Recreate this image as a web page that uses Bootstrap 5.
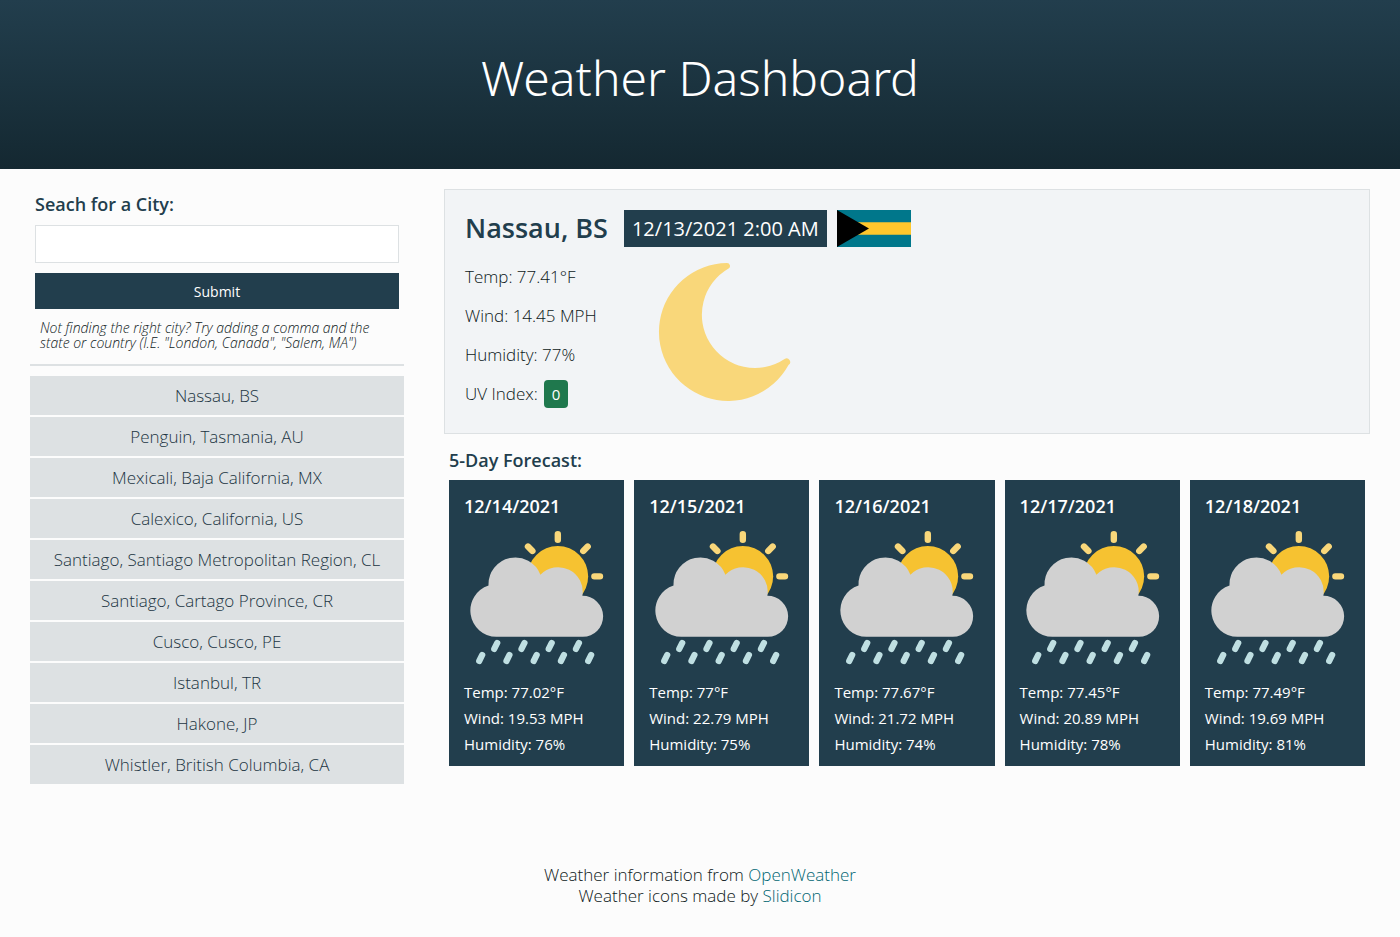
<!DOCTYPE html>
<html lang="en">
<head>
<meta charset="utf-8">
<meta name="viewport" content="width=device-width, initial-scale=1">
<title>Weather Dashboard</title>
<link rel="stylesheet" href="https://cdn.jsdelivr.net/npm/bootstrap@5.3.0/dist/css/bootstrap.min.css">
<style>
  :root { --navy: #223e4d; --mist: #dde1e3; --teal: #006672; }
  body { background: #fcfcfc; color: #0c1820; font-family: "Open Sans", "Noto Sans", sans-serif; font-size: 17px; font-weight: 300; line-height: 21px; }
  .page-head { background: linear-gradient(#223e4d, #142831); color: #fff; padding: 48px 20px 61px; }
  .page-head h1 { font-family: "Noto Sans", "Open Sans", sans-serif; font-size: 48px; font-weight: 300; line-height: 60px; }
  .layout { padding: 20px 10px 0; }
  .layout > * { padding: 0 20px; }
  .side-col { width: 30%; }
  .main-col { width: 70%; }
  .section-title { color: var(--navy); font-size: 18px; font-weight: 600; line-height: 21px; }
  .search-form { padding: 5px 5px 0; gap: 10px; }
  .search-form .form-control { height: 38px; border-color: var(--mist); background: #fff; }
  .search-form .btn { --bs-btn-bg: var(--navy); --bs-btn-color: #fff; --bs-btn-hover-bg: #142831; --bs-btn-hover-color: #fff; height: 36px; font-size: 14px; padding: 0; border: 0; }
  .hint { font-size: 14px; font-style: italic; line-height: 15px; padding: 1px 5px 14px; }
  .history { border-top: 2px solid var(--mist); padding-top: 10px; gap: 2px; }
  .history .btn { --bs-btn-bg: var(--mist); --bs-btn-color: #1b3442; --bs-btn-hover-bg: #cdd3d6; --bs-btn-hover-color: var(--navy); border: 0; font-size: 17px; font-weight: 300; line-height: 21px; padding: 9px 5px; }
  .today { background: #f2f4f6; border: 1px solid var(--mist); padding: 20px 20px 26px; }
  .today h2 { color: var(--navy); font-size: 27px; font-weight: 600; line-height: 35px; margin-right: 16px; }
  .stamp { background: var(--navy); color: #fff; font-size: 20px; font-weight: 400; line-height: 37px; padding: 0 8px; margin-right: 10px; }
  .flag { width: 74px; height: 37px; }
  .stats { padding-top: 19px; gap: 18px; width: 184px; }
  .uv { background: #1f784d; color: #fff; font-size: 15px; font-weight: 400; line-height: 28px; padding: 0 8px; margin: -3px 0 -4px 6px; border-radius: 4px; }
  .moon { width: 150px; height: 150px; margin-top: 10px; }
  .forecast { padding: 16px 5px 0; }
  .days { gap: 10px; padding-top: 9px; }
  .day { background: var(--navy); color: #fff; font-size: 15px; font-weight: 400; line-height: 26px; padding: 15px 15px 9px; flex: 1 1 0; min-width: 160px; }
  .day h4 { font-size: 18px; font-weight: 600; line-height: 22px; }
  .day svg { width: 100%; padding: 8px 0 9px; }
  footer { padding: 80px 0 30px; }
  footer a { color: var(--teal); }
</style>
</head>
<body>
<header class="page-head text-center"><h1 class="m-0">Weather Dashboard</h1></header>

<div class="container-fluid layout d-flex flex-wrap">
  <aside class="side-col">
    <form class="search-form d-flex flex-column" onsubmit="return false">
      <label class="section-title" for="city">Seach for a City:</label>
      <input class="form-control rounded-0" id="city" type="text">
      <button class="btn rounded-0" type="submit">Submit</button>
      <p class="hint m-0">Not finding the right city? Try adding a comma and the state or country (I.E. "London, Canada", "Salem, MA")</p>
    </form>
    <div class="history d-flex flex-column">
      <button class="btn rounded-0" type="button">Nassau, BS</button>
      <button class="btn rounded-0" type="button">Penguin, Tasmania, AU</button>
      <button class="btn rounded-0" type="button">Mexicali, Baja California, MX</button>
      <button class="btn rounded-0" type="button">Calexico, California, US</button>
      <button class="btn rounded-0" type="button">Santiago, Santiago Metropolitan Region, CL</button>
      <button class="btn rounded-0" type="button">Santiago, Cartago Province, CR</button>
      <button class="btn rounded-0" type="button">Cusco, Cusco, PE</button>
      <button class="btn rounded-0" type="button">Istanbul, TR</button>
      <button class="btn rounded-0" type="button">Hakone, JP</button>
      <button class="btn rounded-0" type="button">Whistler, British Columbia, CA</button>
    </div>
  </aside>

  <main class="main-col">
    <section class="today">
      <div class="d-flex flex-wrap">
        <h2 class="mb-0">Nassau, BS</h2>
        <span class="stamp">12/13/2021 2:00 AM</span>
        <svg class="flag" viewBox="0 0 74 37" role="img" aria-label="Flag of the Bahamas">
          <path fill="#00778b" d="M0 0h74v37H0z"/>
          <path fill="#ffc72c" d="M0 12.3h74v12.4H0z"/>
          <path d="M0 0l32 18.5L0 37z"/>
        </svg>
      </div>
      <div class="d-flex">
        <div class="stats d-flex flex-column">
          <div>Temp: 77.41°F</div>
          <div>Wind: 14.45 MPH</div>
          <div>Humidity: 77%</div>
          <div class="d-flex">UV Index: <span class="uv">0</span></div>
        </div>
        <svg class="moon" viewBox="0 0 150 150" role="img" aria-label="Clear night">
          <path fill="#f9d77a" d="M78 5.9A3.1 3.1 0 0 1 79.6 11.6A53.2 53.2 0 1 0 135.6 102A3.1 3.1 0 0 1 139.5 108A69 69 0 1 1 78 5.9z"/>
        </svg>
      </div>
    </section>

    <section class="forecast">
      <h3 class="section-title m-0">5-Day Forecast:</h3>
      <div class="days d-flex flex-wrap" id="days"></div>
    </section>
  </main>
</div>

<footer class="text-center">
  Weather information from <a class="text-decoration-none" href="#openweather">OpenWeather</a><br>
  Weather icons made by <a class="text-decoration-none" href="#slidicon">Slidicon</a>
</footer>

<template id="rain-icon">
  <svg viewBox="0 0 145 145" class="d-block" role="img" aria-label="Sun, clouds and rain" fill="none" stroke-linecap="round">
    <circle cx="93.7" cy="51.3" r="30.3" fill="#f6c231"/>
    <path stroke="#f9d77a" stroke-width="6.4" d="M93.7 9.2v5.6M130.2 51.3h5.6M119.1 25.9l4.4-4.4M68.3 25.9l-4.4-4.4"/>
    <path fill="#d1d1d1" d="M32.3 111.7A26.3 26.3 0 0 1 24.5 60.4A26.8 26.8 0 0 1 76.3 49.7A24.5 24.5 0 0 1 118.2 70.7A20.5 20.5 0 0 1 118.7 111.7z"/>
    <path stroke="#bfdfe2" stroke-width="6.2" d="M33.2 117.8l-3 6m30.2-6l-3 6m30.2-6l-3 6m30.2-6l-3 6M18.2 129.8l-3 6m30.2-6l-3 6m30.2-6l-3 6m30.2-6l-3 6m30.2-6l-3 6"/>
  </svg>
</template>

<script>
  const icon = document.getElementById('rain-icon').innerHTML;
  const days = [
    ['12/14/2021', '77.02', '19.53', 76],
    ['12/15/2021', '77', '22.79', 75],
    ['12/16/2021', '77.67', '21.72', 74],
    ['12/17/2021', '77.45', '20.89', 78],
    ['12/18/2021', '77.49', '19.69', 81]
  ];
  document.getElementById('days').innerHTML = days.map(([date, temp, wind, hum]) => `
    <article class="day">
      <h4 class="m-0">${date}</h4>
      ${icon}
      <div>Temp: ${temp}°F</div>
      <div>Wind: ${wind} MPH</div>
      <div>Humidity: ${hum}%</div>
    </article>`).join('');
</script>
<script src="https://cdn.jsdelivr.net/npm/bootstrap@5.3.0/dist/js/bootstrap.bundle.min.js"></script>
</body>
</html>
